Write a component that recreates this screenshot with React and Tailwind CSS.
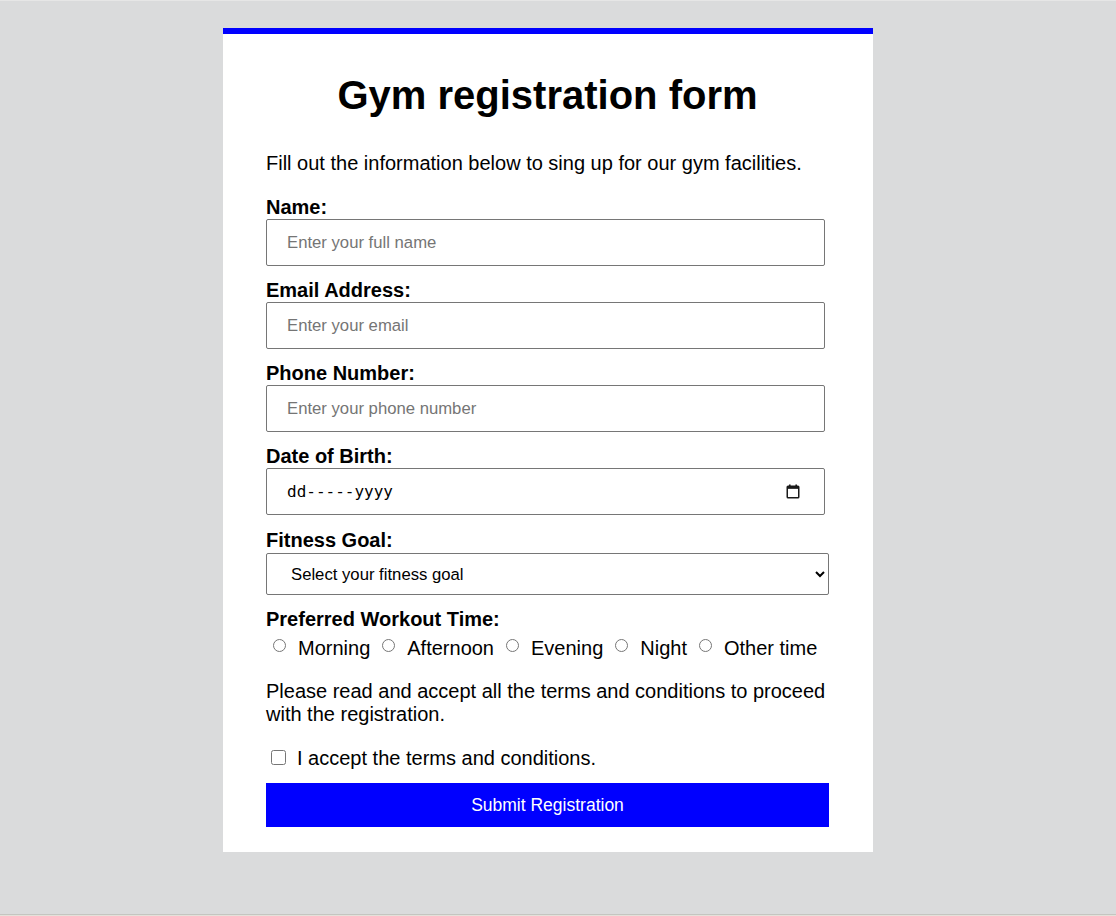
import React from "react";

const labelCls = "block text-[20px] leading-[23px] font-bold text-black";
const inputCls =
  "block w-[559px] h-[47px] border border-[#767676] rounded-[2px] px-[20px] text-[16.7px] text-black bg-white placeholder:text-[#757575] outline-none";

function CalendarIcon() {
  return (
    <svg width="14" height="15" viewBox="0 0 14 15" className="block">
      <rect x="3" y="0.5" width="1.6" height="2.5" fill="#1a1a1a" />
      <rect x="9.4" y="0.5" width="1.6" height="2.5" fill="#1a1a1a" />
      <rect x="1.25" y="2.25" width="11.5" height="11.5" fill="none" stroke="#1a1a1a" strokeWidth="1.5" rx="0.8" />
      <rect x="1.25" y="2.25" width="11.5" height="2.6" fill="#1a1a1a" />
    </svg>
  );
}

function Radio({ label, first }) {
  return (
    <label className={`flex items-start ${first ? "ml-[7px]" : "ml-[12px]"}`}>
      <input type="radio" name="time" className="m-0 mt-[2px] w-[13px] h-[13px]" />
      <span className="ml-[12px] text-[20px] leading-[23px]">{label}</span>
    </label>
  );
}

export default function App() {
  return (
    <div
      className="w-[1116px] h-[916px] bg-[#dadbdc] flex flex-col text-black"
      style={{ fontFamily: '"Liberation Sans", Arial, sans-serif' }}
    >
      <div className="h-px bg-[#e6e6e6]" />
      <div className="flex-1 w-[1096px] flex justify-center pt-[27px]">
        <div className="w-[650px] h-fit bg-white border-t-[6px] border-[#0000ff] pt-[38px] pl-[43px] pr-[44px] pb-[25px]">
          <h1 className="text-[40px] leading-[46px] font-bold text-center">Gym registration form</h1>
          <p className="mt-[34px] text-[20px] leading-[23px]">
            Fill out the information below to sing up for our gym facilities.
          </p>

          <label className={`${labelCls} mt-[21px]`}>Name:</label>
          <input className={inputCls} placeholder="Enter your full name" />

          <label className={`${labelCls} mt-[13px]`}>Email Address:</label>
          <input className={inputCls} placeholder="Enter your email" />

          <label className={`${labelCls} mt-[13px]`}>Phone Number:</label>
          <input className={inputCls} placeholder="Enter your phone number" />

          <label className={`${labelCls} mt-[13px]`}>Date of Birth:</label>
          <div className="flex items-center justify-between w-[559px] h-[47px] border border-[#767676] rounded-[2px] pl-[20px] pr-[24px] bg-white">
            <span
              className="text-[16px] leading-[20px] text-black"
              style={{ fontFamily: '"DejaVu Sans Mono", monospace' }}
            >
              dd-----yyyy
            </span>
            <CalendarIcon />
          </div>

          <label className={`${labelCls} mt-[14px]`}>Fitness Goal:</label>
          <select className="block mt-[1px] w-[563px] h-[42px] border border-[#767676] rounded-[2px] pl-[20px] pr-[4px] text-[16.7px] text-black bg-white">
            <option>Select your fitness goal</option>
            <option>Weight loss</option>
            <option>Muscle gain</option>
            <option>Endurance</option>
          </select>

          <label className={`${labelCls} mt-[13px]`}>Preferred Workout Time:</label>
          <div className="flex mt-[6px]">
            <Radio label="Morning" first />
            <Radio label="Afternoon" />
            <Radio label="Evening" />
            <Radio label="Night" />
            <Radio label="Other time" />
          </div>

          <p className="mt-[20px] text-[20px] leading-[23px]">
            Please read and accept all the terms and conditions to proceed with the registration.
          </p>

          <label className="flex items-start mt-[21px] ml-[5px]">
            <input type="checkbox" className="m-0 mt-[3px] w-[15px] h-[15px]" />
            <span className="ml-[11px] text-[20px] leading-[23px]">I accept the terms and conditions.</span>
          </label>

          <button className="block mt-[13px] w-full h-[44px] bg-[#0000ff] text-white text-[17.5px]">
            Submit Registration
          </button>
        </div>
      </div>
      <div className="h-px bg-[#c4c5c0]" />
      <div className="h-px bg-[#e4e1da]" />
    </div>
  );
}
